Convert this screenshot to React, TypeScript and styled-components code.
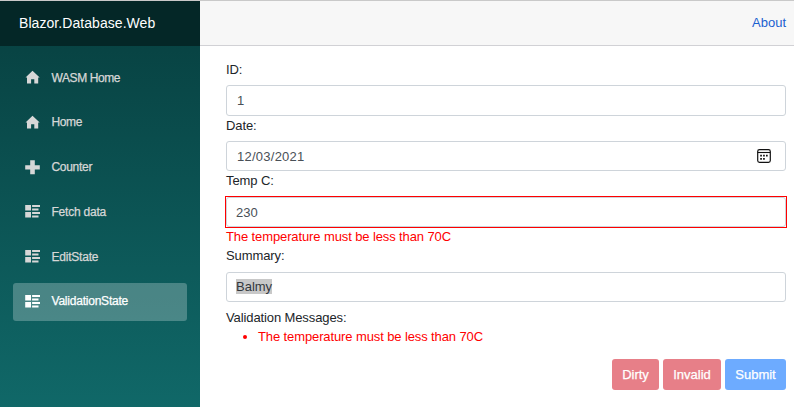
import React from "react";
import styled, { createGlobalStyle } from "styled-components";

const GlobalStyle = createGlobalStyle`
  *, *::before, *::after { box-sizing: border-box; }
  body {
    margin: 0;
    background: #fff;
    color: #212529;
    font: 13px/19px "Liberation Sans", Arial, sans-serif;
  }
`;

const Page = styled.div`
  display: flex;
  height: 407px;
  border-top: 1px solid #c9c9c9;
  overflow: hidden;
`;

const Sidebar = styled.aside`
  width: 200px;
  flex: none;
  background: linear-gradient(180deg, #073f3f 0%, #106868 100%);
`;

const Brand = styled.div`
  height: 45px;
  padding-left: 19px;
  background: #042727;
  color: #fff;
  font-size: 14px;
  line-height: 44px;
  letter-spacing: 0.06px;
`;

const Nav = styled.nav`
  display: flex;
  flex-direction: column;
  gap: 6.8px;
  padding: 13px 13px 0;
`;

const NavItem = styled.a<{ $active?: boolean }>`
  display: flex;
  align-items: center;
  height: 38px;
  padding-left: 12px;
  border-radius: 3px;
  font-size: 12px;
  color: ${(p) => (p.$active ? "#fff" : "#d7d7d7")};
  background: ${(p) => (p.$active ? "rgba(255, 255, 255, 0.25)" : "transparent")};
  -webkit-text-stroke: 0.25px currentColor;
`;

const NavIcon = styled.svg`
  width: 15px;
  height: 15px;
  margin: -1px 11.5px 0 0;
  fill: currentColor;
`;

const NavLabel = styled.span<{ $spacing: number }>`
  letter-spacing: ${(p) => p.$spacing}px;
`;

const Main = styled.main`
  flex: 1;
  display: flex;
  flex-direction: column;
`;

const TopBar = styled.header`
  display: flex;
  justify-content: flex-end;
  height: 45px;
  padding-right: 8px;
  background: #f7f7f7;
  border-bottom: 1px solid #d1d1d5;
  line-height: 43px;
`;

const AboutLink = styled.a`
  color: #1b5fd0;
`;

const Form = styled.form`
  display: flex;
  flex-direction: column;
  padding: 14px 8px 0 26px;
`;

const Label = styled.label<{ $gap?: number }>`
  height: 19px;
  margin-bottom: ${(p) => p.$gap ?? 6}px;
  letter-spacing: -0.1px;
`;

const ListHeading = styled.div`
  height: 19px;
  margin-top: 6px;
  letter-spacing: -0.11px;
`;

const Control = styled.div<{ $height?: number; $inset?: number }>`
  display: flex;
  align-items: center;
  justify-content: space-between;
  height: ${(p) => p.$height ?? 30}px;
  padding: 0 14px 0 ${(p) => p.$inset ?? 9}px;
  border: 1px solid #ced4da;
  border-radius: 3px;
  color: #495057;
`;

const InvalidOutline = styled.div`
  margin: 0 -1px;
  border: 1px solid #f00;
`;

const Value = styled.span<{ $spacing?: number }>`
  letter-spacing: ${(p) => p.$spacing ?? 0}px;
`;

const Selected = styled.span`
  height: 15px;
  margin-top: -1px;
  line-height: 15px;
  background: #c8c8c8;
  color: #32373c;
`;

const CalendarIcon = styled.svg`
  width: 14px;
  height: 14px;
`;

const ErrorText = styled.div`
  height: 18px;
  line-height: 18px;
  color: #f00;
  letter-spacing: -0.11px;
`;

const ErrorList = styled.ul`
  margin: 0;
  padding-left: 32px;
  color: #f00;
  letter-spacing: -0.11px;
`;

const Actions = styled.div`
  display: flex;
  justify-content: flex-end;
  gap: 4px;
  margin-top: 13px;
`;

const Button = styled.button<{ $width: number; $color: string }>`
  width: ${(p) => p.$width}px;
  height: 31px;
  padding: 0;
  border: 0;
  border-radius: 3px;
  background: ${(p) => p.$color};
  color: #fff;
  font: 13px/31px "Liberation Sans", Arial, sans-serif;
  -webkit-text-stroke: 0.25px #fff;
`;

const House = () => (
  <NavIcon viewBox="0 0 15 15">
    <path d="M7.5 .8 14.7 7.6H13.2v6H9.3V9.3H6.1v4.3H2V7.6H.5z" />
  </NavIcon>
);

const Plus = () => (
  <NavIcon viewBox="0 0 15 15">
    <path d="M5.2 .3h4.6v4.9h5v4.2h-5v4.9H5.2V9.4h-5V5.2h5z" />
  </NavIcon>
);

const Rich = () => (
  <NavIcon viewBox="0 0 15 15">
    <path d="M.2 1h5.8v5.6H.2zM.2 7.9h5.8v5.7H.2zM7.1 1H15v2.1H7.1zM7.1 4.4h6.4v2.2H7.1zM7.1 7.9H15V10H7.1zM7.1 11.4h6.4v2.2H7.1z" />
  </NavIcon>
);

const items = [
  { label: "WASM Home", Icon: House, spacing: -0.4 },
  { label: "Home", Icon: House, spacing: -0.4 },
  { label: "Counter", Icon: Plus, spacing: -0.3 },
  { label: "Fetch data", Icon: Rich, spacing: -0.22 },
  { label: "EditState", Icon: Rich, spacing: -0.22 },
  { label: "ValidationState", Icon: Rich, spacing: -0.22, active: true },
];

const message = "The temperature must be less than 70C";

export default function App() {
  return (
    <>
      <GlobalStyle />
      <Page>
        <Sidebar>
          <Brand>Blazor.Database.Web</Brand>
          <Nav>
            {items.map(({ label, Icon, spacing, active }) => (
              <NavItem key={label} $active={active}>
                <Icon />
                <NavLabel $spacing={spacing}>{label}</NavLabel>
              </NavItem>
            ))}
          </Nav>
        </Sidebar>
        <Main>
          <TopBar>
            <AboutLink>About</AboutLink>
          </TopBar>
          <Form>
            <Label>ID:</Label>
            <Control $height={31} $inset={10}>
              <Value>1</Value>
            </Control>
            <Label>Date:</Label>
            <Control $inset={10}>
              <Value $spacing={0.25}>12/03/2021</Value>
              <CalendarIcon viewBox="0 0 14 14" fill="none">
                <rect x=".7" y=".7" width="12.6" height="12.6" rx="1.8" stroke="#111" strokeWidth="1.2" />
                <path d="M.7 3.5h12.6" stroke="#111" strokeWidth="1.1" />
                <path d="M3.2 6.7h1.7M6.1 6.7h1.7M9 6.7h1.7M3.2 9.8h1.7M6.1 9.8h1.7" stroke="#111" strokeWidth="1.7" />
              </CalendarIcon>
            </Control>
            <Label>Temp C:</Label>
            <InvalidOutline>
              <Control>
                <Value>230</Value>
              </Control>
            </InvalidOutline>
            <ErrorText>{message}</ErrorText>
            <Label $gap={7}>Summary:</Label>
            <Control>
              <Selected>Balmy</Selected>
            </Control>
            <ListHeading>Validation Messages:</ListHeading>
            <ErrorList>
              <li>{message}</li>
            </ErrorList>
            <Actions>
              <Button type="button" $width={47} $color="#e77f88">Dirty</Button>
              <Button type="button" $width={58} $color="#e77f88">Invalid</Button>
              <Button type="button" $width={61} $color="#6dabff">Submit</Button>
            </Actions>
          </Form>
        </Main>
      </Page>
    </>
  );
}
